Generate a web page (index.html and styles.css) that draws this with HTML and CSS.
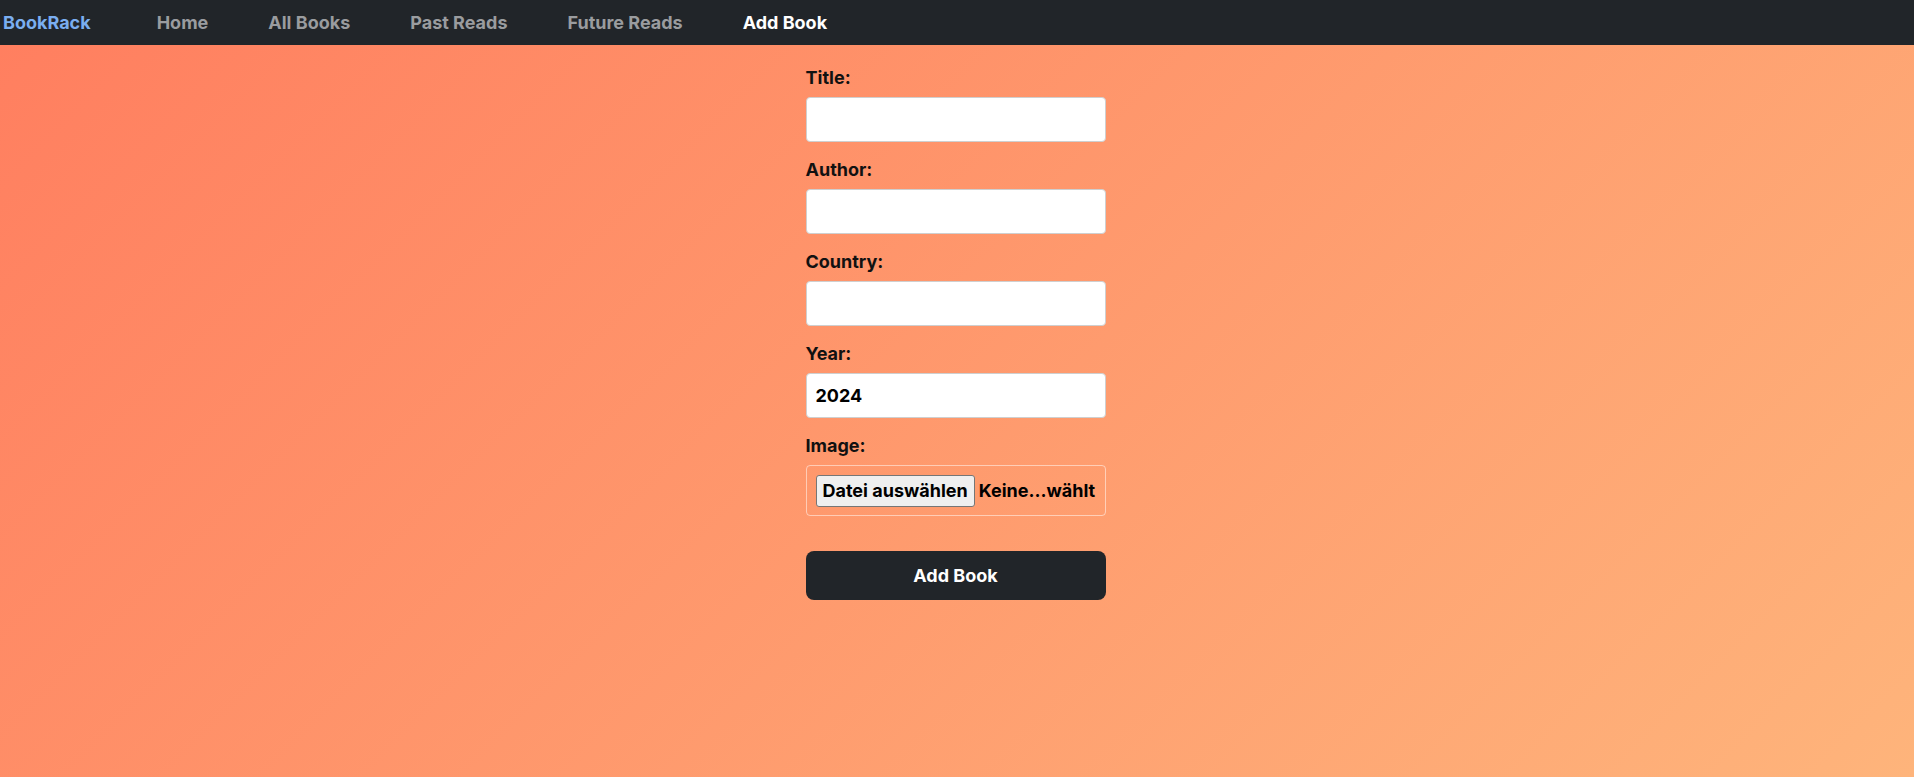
FILE: index.html
```html
<!DOCTYPE html>
<html lang="de">
<head>
<meta charset="utf-8">
<title>BookRack – Add Book</title>
<link rel="stylesheet" href="styles.css">
</head>
<body>
<nav class="navbar">
  <a class="brand" href="#">BookRack</a>
  <ul class="nav-links">
    <li><a class="nav-link" href="#">Home</a></li>
    <li><a class="nav-link" href="#">All Books</a></li>
    <li><a class="nav-link" href="#">Past Reads</a></li>
    <li><a class="nav-link" href="#">Future Reads</a></li>
    <li><a class="nav-link active" href="#">Add Book</a></li>
  </ul>
</nav>
<main class="page">
  <form class="book-form">
    <div class="field">
      <label class="label" for="title">Title:</label>
      <input class="input" id="title" type="text">
    </div>
    <div class="field">
      <label class="label" for="author">Author:</label>
      <input class="input" id="author" type="text">
    </div>
    <div class="field">
      <label class="label" for="country">Country:</label>
      <input class="input" id="country" type="text">
    </div>
    <div class="field">
      <label class="label" for="year">Year:</label>
      <input class="input" id="year" type="text" value="2024">
    </div>
    <div class="field field-image">
      <span class="label">Image:</span>
      <div class="file-box">
        <span class="file-btn">Datei auswählen</span>
        <span class="file-name">Keine…wählt</span>
      </div>
    </div>
    <button class="submit" type="button">Add Book</button>
  </form>
</main>
</body>
</html>
```

FILE: styles.css
```css
* { box-sizing: border-box; }
html, body { margin: 0; padding: 0; }
body {
  min-height: 100vh;
  font-family: Inter, "Noto Sans", sans-serif;
  font-weight: 700;
  font-size: 18px;
  line-height: 24px;
  color: #111;
  background: linear-gradient(135deg, #ff7e5f 0%, #feb47b 100%);
}
.navbar {
  height: 45px;
  background: #212529;
  display: flex;
  align-items: center;
  padding: 0 0 0 3px;
}
.brand {
  color: #7aaef0;
  text-decoration: none;
  margin-right: 36px;
}
.nav-links {
  list-style: none;
  margin: 0;
  padding: 0;
  display: flex;
}
.nav-link {
  display: block;
  padding: 0 30px;
  color: #9a9c9f;
  text-decoration: none;
}
.nav-link.active { color: #fff; }
.page {
  display: flex;
  justify-content: center;
  padding: 21px 3px 0 0;
}
.book-form {
  width: 300px;
  display: flex;
  flex-direction: column;
}
.field {
  display: flex;
  flex-direction: column;
  margin-bottom: 16px;
}
.label {
  display: block;
  margin-bottom: 7px;
  color: #111;
}
.input {
  height: 45px;
  border: 1px solid #cfcfcf;
  border-radius: 4px;
  background: #fff;
  padding: 0 9px;
  font: inherit;
  color: #000;
  outline: none;
}
.field-image { margin-bottom: 35px; }
.file-box {
  display: flex;
  align-items: center;
  gap: 4px;
  height: 51px;
  padding: 0 9px;
  border: 1px solid rgba(255, 255, 255, 0.5);
  border-radius: 4px;
  white-space: nowrap;
}
.file-btn {
  display: inline-block;
  height: 32px;
  padding: 3px 6px;
  border: 1px solid #767676;
  border-radius: 3px;
  background: #efefef;
  color: #000;
}
.file-name { color: #000; }
.submit {
  height: 49px;
  border: none;
  border-radius: 8px;
  background: #212529;
  color: #fff;
  font: inherit;
  cursor: pointer;
}
```
